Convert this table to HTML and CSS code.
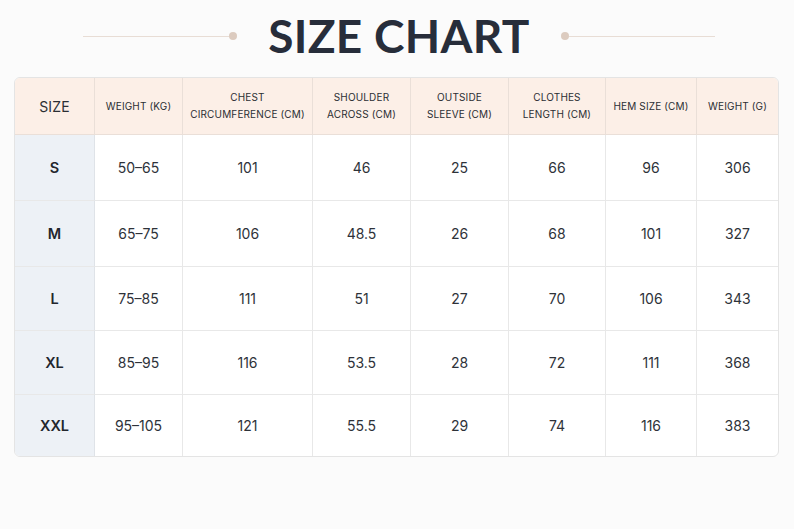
FILE: index.html
```html
<!DOCTYPE html>
<html lang="en">
<head>
<meta charset="utf-8">
<title>Size Chart</title>
<link rel="stylesheet" href="styles.css">
</head>
<body>
<div class="page">
  <header class="title-row">
    <span class="rule"></span><span class="dot"></span>
    <h1 class="title">SIZE CHART</h1>
    <span class="dot"></span><span class="rule"></span>
  </header>
  <div class="chart">
    <div class="cell head first big">SIZE</div>
    <div class="cell head">WEIGHT (KG)</div>
    <div class="cell head">CHEST<br>CIRCUMFERENCE (CM)</div>
    <div class="cell head">SHOULDER<br>ACROSS (CM)</div>
    <div class="cell head">OUTSIDE<br>SLEEVE (CM)</div>
    <div class="cell head">CLOTHES<br>LENGTH (CM)</div>
    <div class="cell head">HEM SIZE (CM)</div>
    <div class="cell head last">WEIGHT (G)</div>

    <div class="cell size">S</div><div class="cell">50–65</div><div class="cell">101</div><div class="cell">46</div><div class="cell">25</div><div class="cell">66</div><div class="cell">96</div><div class="cell last">306</div>
    <div class="cell size">M</div><div class="cell">65–75</div><div class="cell">106</div><div class="cell">48.5</div><div class="cell">26</div><div class="cell">68</div><div class="cell">101</div><div class="cell last">327</div>
    <div class="cell size">L</div><div class="cell">75–85</div><div class="cell">111</div><div class="cell">51</div><div class="cell">27</div><div class="cell">70</div><div class="cell">106</div><div class="cell last">343</div>
    <div class="cell size">XL</div><div class="cell">85–95</div><div class="cell">116</div><div class="cell">53.5</div><div class="cell">28</div><div class="cell">72</div><div class="cell">111</div><div class="cell last">368</div>
    <div class="cell size bottom">XXL</div><div class="cell bottom">95–105</div><div class="cell bottom">121</div><div class="cell bottom">55.5</div><div class="cell bottom">29</div><div class="cell bottom">74</div><div class="cell bottom">116</div><div class="cell bottom last">383</div>
  </div>
</div>
</body>
</html>
```
FILE: styles.css
```css
html, body {
  margin: 0;
  padding: 0;
  background: #fbfbfb;
}
body {
  font-family: Inter, "Noto Sans", sans-serif;
  color: #2b2f36;
}
.page {
  padding: 10px 0 0 14px;
  width: 765px;
}
.title-row {
  display: flex;
  align-items: center;
  justify-content: center;
  height: 52px;
  margin-bottom: 15px;
  padding-left: 5px;
}
.rule {
  width: 146px;
  height: 1px;
  background: #e8ddd5;
}
.dot {
  width: 8px;
  height: 8px;
  border-radius: 50%;
  background: #dccbbf;
}
.title {
  margin: 0 31px;
  font-family: Lato, Inter, sans-serif;
  font-size: 46px;
  font-weight: 700;
  letter-spacing: 0.3px;
  color: #272d3a;
  line-height: 52px;
}
.chart {
  display: grid;
  grid-template-columns: 80px 88px 130px 98px 98px 97px 91px 81px;
  grid-template-rows: 57px 66px 66px 64px 64px 61px;
  border: 1px solid #e4e4e4;
  border-radius: 6px;
  overflow: hidden;
  background: #fff;
}
.cell {
  display: flex;
  align-items: center;
  justify-content: center;
  text-align: center;
  border-right: 1px solid #e8e8e8;
  border-bottom: 1px solid #e8e8e8;
  font-size: 14px;
  color: #2e3239;
}
.cell.last { border-right: none; }
.cell.bottom { border-bottom: none; }
.head {
  background: #fcefe7;
  font-size: 10px;
  line-height: 17px;
  letter-spacing: 0.15px;
  border-color: #eadfd8;
  color: #2b2e33;
}
.head.big {
  font-size: 14px;
}
.size {
  background: #edf1f6;
  font-weight: 600;
  font-size: 14.5px;
  color: #22262d;
  border-right-color: #dfe3e8;
}
```
